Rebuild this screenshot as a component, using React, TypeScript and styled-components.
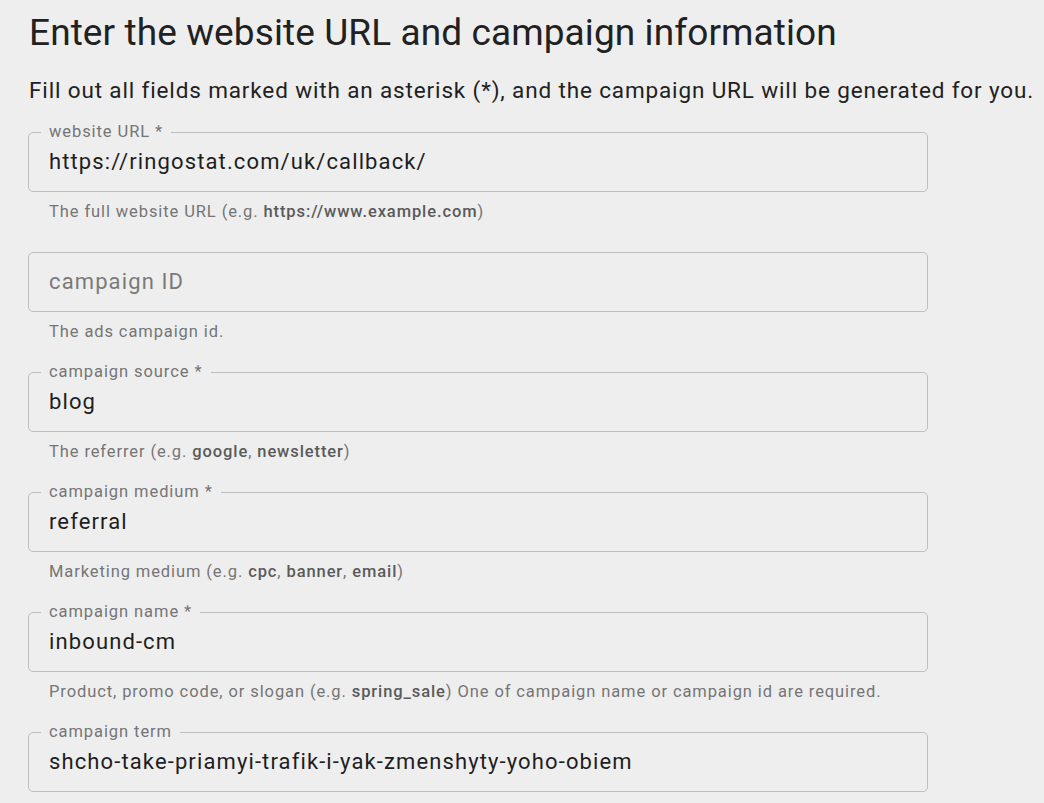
import React from "react";
import styled, { createGlobalStyle } from "styled-components";

const Global = createGlobalStyle`
  html, body { margin: 0; padding: 0; background: #eeeeee; }
  body { font-family: Roboto, "Noto Sans", "Liberation Sans", sans-serif; -webkit-font-smoothing: antialiased; }
  * { box-sizing: border-box; }
`;

const Page = styled.main`
  padding: 10px 28px 0 28px;
  min-height: 803px;
  background: #eeeeee;
`;

const Title = styled.h1`
  margin: 0 0 0 1px;
  font-size: 37px;
  font-weight: 400;
  line-height: 46px;
  letter-spacing: 0.1px;
  color: #212121;
  white-space: nowrap;
`;

const Subtitle = styled.p`
  margin: 18px 0 26px 1px;
  font-size: 22.5px;
  font-weight: 400;
  line-height: 32px;
  letter-spacing: 0.86px;
  color: #212121;
  white-space: nowrap;
`;

const Form = styled.div`
  display: flex;
  flex-direction: column;
  gap: 30px;
`;

const FieldWrap = styled.div`
  display: flex;
  flex-direction: column;
  width: 900px;
`;

const Box = styled.div`
  position: relative;
  height: 60px;
  border: 1px solid #bdbdbd;
  border-radius: 5px;
  display: flex;
  align-items: center;
  padding: 0 20px;
`;

const Label = styled.label`
  position: absolute;
  left: 12px;
  top: -1px;
  transform: translateY(-50%);
  padding: 0 8px 0 8px;
  background: #eeeeee;
  font-size: 16.5px;
  line-height: 18px;
  letter-spacing: 0.92px;
  color: #757575;
  white-space: nowrap;
`;

const Input = styled.input`
  width: 100%;
  border: none;
  outline: none;
  background: transparent;
  padding: 0;
  font-family: inherit;
  font-size: 22px;
  line-height: 28px;
  letter-spacing: 1.12px;
  color: #1e1e1e;
  &::placeholder { color: #7a7a7a; opacity: 1; }
`;

const Helper = styled.div`
  margin-top: 10px;
  padding-left: 21px;
  font-size: 16.5px;
  line-height: 20px;
  letter-spacing: 0.9px;
  color: #757575;
  white-space: nowrap;
  b { font-weight: 500; color: #5a5a5a; }
`;

type FieldProps = {
  label?: string;
  value?: string;
  placeholder?: string;
  helper: React.ReactNode;
};

const Field = ({ label, value, placeholder, helper }: FieldProps) => (
  <FieldWrap>
    <Box>
      {label && <Label>{label}</Label>}
      <Input readOnly value={value ?? ""} placeholder={placeholder} />
    </Box>
    {helper && <Helper>{helper}</Helper>}
  </FieldWrap>
);

export default function App() {
  return (
    <Page>
      <Global />
      <Title>Enter the website URL and campaign information</Title>
      <Subtitle>
        Fill out all fields marked with an asterisk (*), and the campaign URL will be generated for you.
      </Subtitle>
      <Form>
        <Field
          label="website URL *"
          value="https://ringostat.com/uk/callback/"
          helper={<>The full website URL (e.g. <b>https://www.example.com</b>)</>}
        />
        <Field placeholder="campaign ID" helper="The ads campaign id." />
        <Field
          label="campaign source *"
          value="blog"
          helper={<>The referrer (e.g. <b>google</b>, <b>newsletter</b>)</>}
        />
        <Field
          label="campaign medium *"
          value="referral"
          helper={<>Marketing medium (e.g. <b>cpc</b>, <b>banner</b>, <b>email</b>)</>}
        />
        <Field
          label="campaign name *"
          value="inbound-cm"
          helper={<>Product, promo code, or slogan (e.g. <b>spring_sale</b>) One of campaign name or campaign id are required.</>}
        />
        <Field
          label="campaign term"
          value="shcho-take-priamyi-trafik-i-yak-zmenshyty-yoho-obiem"
          helper={null}
        />
      </Form>
    </Page>
  );
}
